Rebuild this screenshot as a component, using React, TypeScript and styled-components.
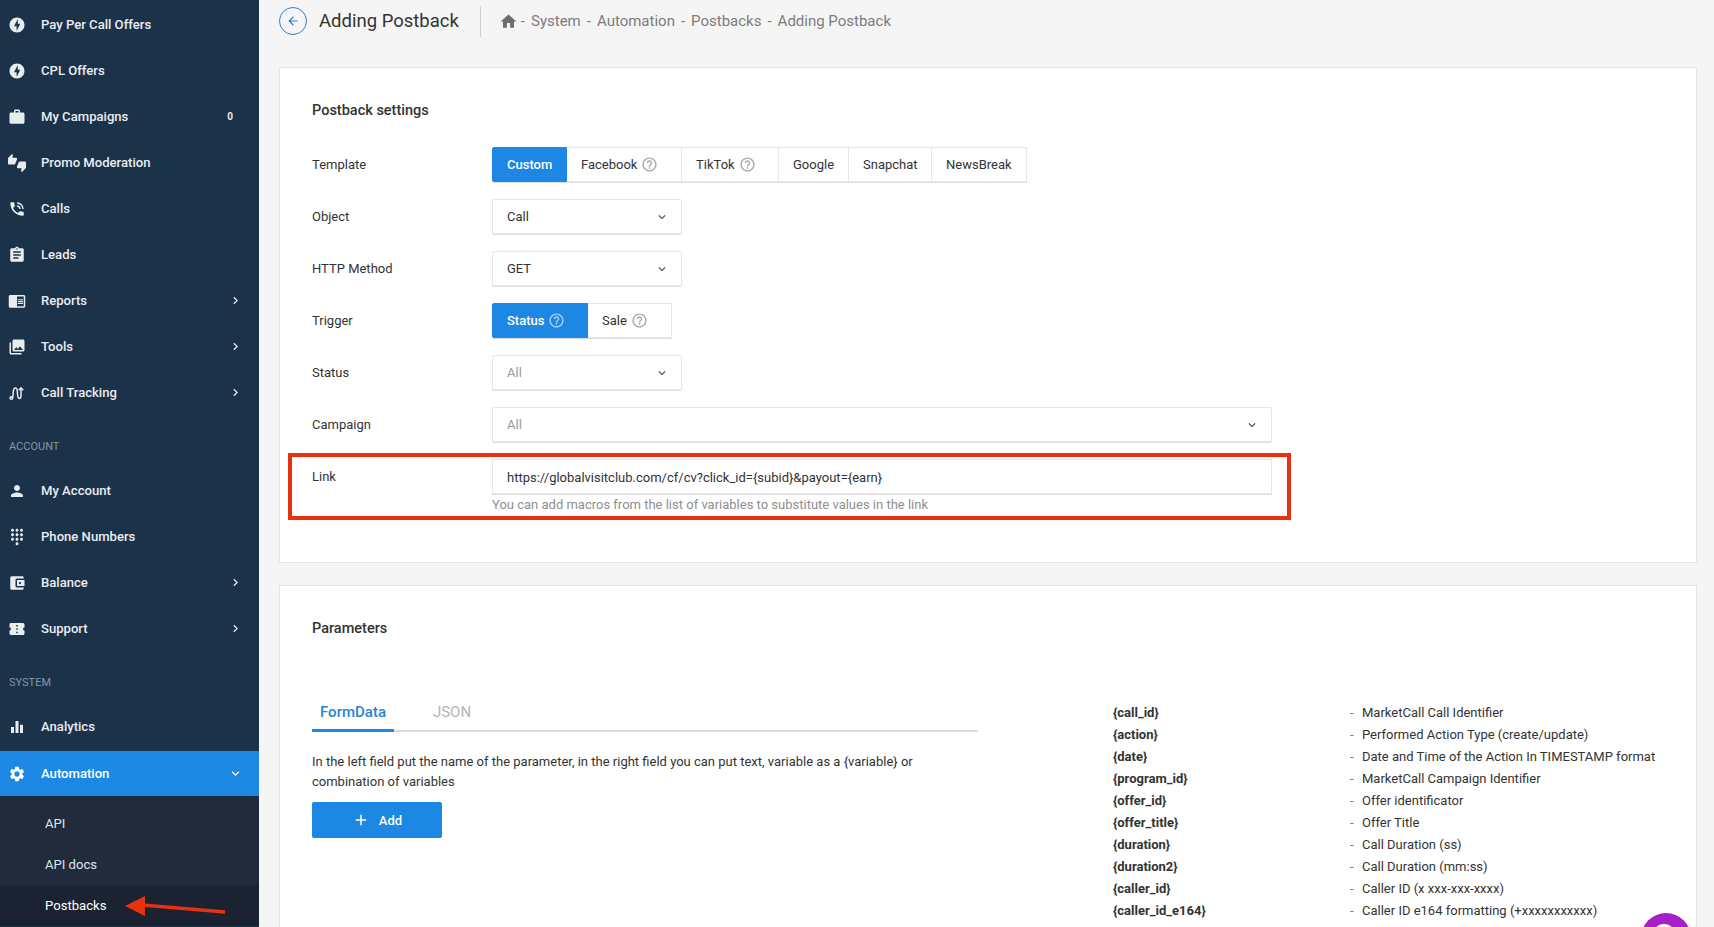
import React from 'react';
import styled, { createGlobalStyle } from 'styled-components';
import {
  MdOfflineBolt,
  MdWork,
  MdThumbsUpDown,
  MdPhoneInTalk,
  MdAssignment,
  MdChromeReaderMode,
  MdPhotoLibrary,
  MdPerson,
  MdDialpad,
  MdAccountBalanceWallet,
  MdConfirmationNumber,
  MdEqualizer,
  MdSettings,
  MdHome,
  MdHelpOutline,
  MdKeyboardArrowRight,
  MdKeyboardArrowDown,
  MdArrowBack,
  MdAdd,
} from 'react-icons/md';

const GlobalStyle = createGlobalStyle`
  html, body {
    margin: 0;
    height: 100%;
    overflow: hidden;
    background: #f5f5f5;
    font-family: Roboto, "Liberation Sans", sans-serif;
  }
  * { box-sizing: border-box; }
`;

const Page = styled.div`
  display: flex;
  width: 1714px;
  height: 927px;
  overflow: hidden;
`;

const Sidebar = styled.nav`
  flex: 0 0 259px;
  height: 927px;
  padding-top: 1px;
  background: #1c3248;
  color: #e8edf2;
  overflow: hidden;
`;

const MenuRow = styled.div<{ $active?: boolean }>`
  display: flex;
  align-items: center;
  height: ${(p) => (p.$active ? '45px' : '46px')};
  margin-top: ${(p) => (p.$active ? '2px' : '0')};
  padding: 0 16px 0 8px;
  background: ${(p) => (p.$active ? '#1d87e4' : 'transparent')};
  color: ${(p) => (p.$active ? '#ffffff' : '#e8edf2')};
  font-size: 13.1px;
  font-weight: 500;
`;

const MenuIcon = styled.span`
  display: flex;
  justify-content: center;
  width: 18px;
  margin-right: 15px;
  padding-top: 1px;
  font-size: 18px;
`;

const MenuLabel = styled.span`
  flex: 1;
`;

const MenuBadge = styled.span`
  margin-right: 10px;
  font-size: 10px;
  font-weight: 700;
`;

const Chevron = styled.span`
  display: flex;
  font-size: 15px;
`;

const SectionLabel = styled.div`
  display: flex;
  align-items: flex-end;
  height: 52px;
  padding: 0 0 14px 9px;
  color: #8595a6;
  font-size: 11px;
`;

const SubMenu = styled.div`
  padding-top: 7px;
  background: #222b3b;
`;

const SubRow = styled.div<{ $active?: boolean }>`
  display: flex;
  align-items: center;
  height: 41px;
  padding-left: 45px;
  background: ${(p) => (p.$active ? '#1b2231' : 'transparent')};
  color: ${(p) => (p.$active ? '#ffffff' : '#dfe4ea')};
  font-size: 13.1px;
`;

const Main = styled.main`
  flex: 1;
  padding: 0 17px 0 20px;
  overflow: hidden;
`;

const TopBar = styled.header`
  display: flex;
  align-items: center;
  height: 42px;
  margin-bottom: 25px;
`;

const BackButton = styled.div`
  display: flex;
  align-items: center;
  justify-content: center;
  width: 28px;
  height: 28px;
  margin-right: 12px;
  border: 1px solid #2f80c8;
  border-radius: 50%;
  color: #2f80c8;
  font-size: 14px;
`;

const PageTitle = styled.h1`
  margin: 0;
  padding-right: 21px;
  color: #333333;
  font-size: 18.5px;
  font-weight: 400;
`;

const Divider = styled.div`
  align-self: center;
  width: 1px;
  height: 31px;
  margin-right: 18px;
  background: #cfcfcf;
`;

const Crumbs = styled.div`
  display: flex;
  align-items: center;
  color: #7c7c7c;
  font-size: 15px;
`;

const CrumbHome = styled.span`
  display: flex;
  margin-right: -3px;
  color: #6e6e6e;
  font-size: 19px;
`;

const CrumbDash = styled.span`
  margin: 0 6px;
`;

const Card = styled.section<{ $height: number }>`
  height: ${(p) => p.$height}px;
  margin-bottom: 22px;
  padding: 33px 32px 0;
  background: #ffffff;
  border: 1px solid #e6e6e6;
`;

const CardTitle = styled.h2`
  margin: 0;
  color: #333333;
  font-size: 14.5px;
  line-height: 20px;
  font-weight: 500;
`;

const Form = styled.div`
  display: flex;
  flex-direction: column;
  gap: 17px;
  width: 960px;
  margin-top: 26px;
`;

const FormRow = styled.div`
  position: relative;
  display: grid;
  grid-template-columns: 180px 1fr;
  align-items: start;
  color: #333333;
  font-size: 13px;
`;

const FormLabel = styled.label`
  display: flex;
  align-items: center;
  height: 35px;
`;

const ButtonGroup = styled.div`
  display: flex;
`;

const GroupButton = styled.div<{ $active?: boolean; $width: number }>`
  display: flex;
  align-items: center;
  justify-content: flex-start;
  gap: 4px;
  width: ${(p) => p.$width}px;
  height: 35px;
  padding-left: 14px;
  background: ${(p) => (p.$active ? '#1d87e4' : '#ffffff')};
  border: 1px solid ${(p) => (p.$active ? '#1d87e4' : '#e6e6e6')};
  border-left-width: 0;
  box-shadow: 0 1px 0 #dddddd;
  color: ${(p) => (p.$active ? '#ffffff' : '#333333')};
  font-weight: ${(p) => (p.$active ? 500 : 400)};

  &:first-child {
    border-left-width: 1px;
    border-radius: 2px 0 0 2px;
  }
`;

const HelpIcon = styled.span<{ $active?: boolean }>`
  display: flex;
  color: ${(p) => (p.$active ? '#a7d2f6' : '#a8a8a8')};
  font-size: 17px;
`;

const Select = styled.div<{ $wide?: boolean; $muted?: boolean }>`
  display: flex;
  align-items: center;
  justify-content: space-between;
  width: ${(p) => (p.$wide ? '100%' : '190px')};
  height: 35px;
  padding: 0 12px 0 14px;
  background: #ffffff;
  border: 1px solid #e6e6e6;
  box-shadow: 0 1px 0 #dddddd;
  color: ${(p) => (p.$muted ? '#9a9a9a' : '#333333')};
  border-radius: 2px;
`;

const SelectArrow = styled.span`
  display: flex;
  color: #444444;
  font-size: 14px;
`;

const Input = styled.div`
  display: flex;
  align-items: center;
  height: 35px;
  padding: 1px 0 0 14px;
  background: #ffffff;
  border: 1px solid #e6e6e6;
  box-shadow: 0 1px 0 #dddddd;
  color: #333333;
`;

const Hint = styled.div`
  margin-top: 3px;
  color: #8f8f8f;
  font-size: 13px;
  line-height: 16px;
`;

const Highlight = styled.div`
  position: absolute;
  left: -24px;
  top: -6px;
  width: 1003px;
  height: 67px;
  border: 4px solid #e6320f;
  pointer-events: none;
`;

const Parameters = styled.div`
  display: grid;
  grid-template-columns: 666px 1fr;
  column-gap: 135px;
  margin-top: 56px;
`;

const Tabs = styled.div`
  display: flex;
  height: 37px;
  border-bottom: 2px solid #dddddd;
`;

const Tab = styled.div<{ $active?: boolean }>`
  display: flex;
  align-items: center;
  justify-content: center;
  width: ${(p) => (p.$active ? '82px' : '116px')};
  height: 37px;
  border-bottom: 3px solid ${(p) => (p.$active ? '#1d87e4' : 'transparent')};
  color: ${(p) => (p.$active ? '#2a84d2' : '#b5b5b5')};
  font-size: 15px;
  font-weight: ${(p) => (p.$active ? 500 : 400)};
`;

const Description = styled.p`
  margin: 20px 0 10px;
  color: #333333;
  font-size: 13px;
  line-height: 20px;
`;

const AddButton = styled.div`
  display: flex;
  align-items: center;
  justify-content: center;
  gap: 9px;
  width: 130px;
  height: 36px;
  background: #1d87e4;
  border-radius: 2px;
  color: #ffffff;
  font-size: 13px;
  font-weight: 500;
`;

const Macros = styled.div`
  padding-top: 6px;
`;

const MacroRow = styled.div`
  display: grid;
  grid-template-columns: 237px 12px 1fr;
  height: 22px;
  align-items: center;
  color: #333333;
  font-size: 13px;
  white-space: nowrap;
`;

const MacroName = styled.span`
  font-weight: 700;
`;

const MacroDash = styled.span`
  color: #777777;
`;

const ChatBubble = styled.div`
  position: absolute;
  left: 1641px;
  top: 913px;
  width: 50px;
  height: 50px;
  border-radius: 50%;
  background: #a61fcb;

  &::before {
    content: '';
    position: absolute;
    left: 12px;
    top: 11px;
    width: 22px;
    height: 22px;
    border-radius: 50%;
    background: #ffffff;
  }
`;

const ArrowMark = styled.svg`
  position: absolute;
  left: 124px;
  top: 893px;
`;

const CallTrackingIcon = () => (
  <svg width="18" height="18" viewBox="0 0 18 18" fill="none" stroke="currentColor" strokeWidth="1.5">
    <circle cx="3.4" cy="14" r="1.3" />
    <path d="M4.6 13.4c.7-1.4.4-3 .6-5.2C5.400 5.800 5.900 4 7.400 4s1.900 1.800 2 4.200c.1 2.400.1 6.300 2 6.300 1.500 0 1.600-1.500 1.600-3V4" />
    <path d="M10.800 6.200 13 3.800l2.200 2.400" />
  </svg>
);

const mainMenu = [
  { label: 'Pay Per Call Offers', icon: <MdOfflineBolt /> },
  { label: 'CPL Offers', icon: <MdOfflineBolt /> },
  { label: 'My Campaigns', icon: <MdWork />, badge: '0' },
  { label: 'Promo Moderation', icon: <MdThumbsUpDown /> },
  { label: 'Calls', icon: <MdPhoneInTalk /> },
  { label: 'Leads', icon: <MdAssignment /> },
  { label: 'Reports', icon: <MdChromeReaderMode />, arrow: true },
  { label: 'Tools', icon: <MdPhotoLibrary />, arrow: true },
  { label: 'Call Tracking', icon: <CallTrackingIcon />, arrow: true },
];

const accountMenu = [
  { label: 'My Account', icon: <MdPerson /> },
  { label: 'Phone Numbers', icon: <MdDialpad /> },
  { label: 'Balance', icon: <MdAccountBalanceWallet />, arrow: true },
  { label: 'Support', icon: <MdConfirmationNumber />, arrow: true },
];

const macros = [
  ['{call_id}', 'MarketCall Call Identifier'],
  ['{action}', 'Performed Action Type (create/update)'],
  ['{date}', 'Date and Time of the Action In TIMESTAMP format'],
  ['{program_id}', 'MarketCall Campaign Identifier'],
  ['{offer_id}', 'Offer identificator'],
  ['{offer_title}', 'Offer Title'],
  ['{duration}', 'Call Duration (ss)'],
  ['{duration2}', 'Call Duration (mm:ss)'],
  ['{caller_id}', 'Caller ID (x xxx-xxx-xxxx)'],
  ['{caller_id_e164}', 'Caller ID e164 formatting (+xxxxxxxxxxx)'],
];

const templates = [
  { label: 'Custom', width: 75, active: true },
  { label: 'Facebook', width: 115, help: true },
  { label: 'TikTok', width: 97, help: true },
  { label: 'Google', width: 70 },
  { label: 'Snapchat', width: 83 },
  { label: 'NewsBreak', width: 95 },
];

type Item = { label: string; icon: React.ReactNode; badge?: string; arrow?: boolean };

const MenuItem = ({ item }: { item: Item }) => (
  <MenuRow>
    <MenuIcon>{item.icon}</MenuIcon>
    <MenuLabel>{item.label}</MenuLabel>
    {item.badge && <MenuBadge>{item.badge}</MenuBadge>}
    {item.arrow && (
      <Chevron>
        <MdKeyboardArrowRight />
      </Chevron>
    )}
  </MenuRow>
);

const SelectBox = ({ value, wide, muted }: { value: string; wide?: boolean; muted?: boolean }) => (
  <Select $wide={wide} $muted={muted}>
    {value}
    <SelectArrow>
      <MdKeyboardArrowDown />
    </SelectArrow>
  </Select>
);

const App = () => {
  const crumbs = ['System', 'Automation', 'Postbacks', 'Adding Postback'];

  return (
    <Page>
      <GlobalStyle />
      <Sidebar>
        {mainMenu.map((item) => (
          <MenuItem key={item.label} item={item} />
        ))}
        <SectionLabel>ACCOUNT</SectionLabel>
        {accountMenu.map((item) => (
          <MenuItem key={item.label} item={item} />
        ))}
        <SectionLabel>SYSTEM</SectionLabel>
        <MenuItem item={{ label: 'Analytics', icon: <MdEqualizer /> }} />
        <MenuRow $active>
          <MenuIcon>
            <MdSettings />
          </MenuIcon>
          <MenuLabel>Automation</MenuLabel>
          <Chevron>
            <MdKeyboardArrowDown />
          </Chevron>
        </MenuRow>
        <SubMenu>
          <SubRow>API</SubRow>
          <SubRow>API docs</SubRow>
          <SubRow $active>Postbacks</SubRow>
        </SubMenu>
      </Sidebar>
      <ArrowMark width="102" height="26" viewBox="0 0 102 26">
        <path d="M18 12 L101 19" stroke="#e6320f" strokeWidth="3.5" fill="none" />
        <path d="M1 13 L21 3 L21 23 Z" fill="#e6320f" />
      </ArrowMark>

      <Main>
        <TopBar>
          <BackButton>
            <MdArrowBack />
          </BackButton>
          <PageTitle>Adding Postback</PageTitle>
          <Divider />
          <Crumbs>
            <CrumbHome>
              <MdHome />
            </CrumbHome>
            {crumbs.map((crumb) => (
              <React.Fragment key={crumb}>
                <CrumbDash>-</CrumbDash>
                {crumb}
              </React.Fragment>
            ))}
          </Crumbs>
        </TopBar>

        <Card $height={496}>
          <CardTitle>Postback settings</CardTitle>
          <Form>
            <FormRow>
              <FormLabel>Template</FormLabel>
              <ButtonGroup>
                {templates.map((t) => (
                  <GroupButton key={t.label} $active={t.active} $width={t.width}>
                    {t.label}
                    {t.help && (
                      <HelpIcon>
                        <MdHelpOutline />
                      </HelpIcon>
                    )}
                  </GroupButton>
                ))}
              </ButtonGroup>
            </FormRow>
            <FormRow>
              <FormLabel>Object</FormLabel>
              <SelectBox value="Call" />
            </FormRow>
            <FormRow>
              <FormLabel>HTTP Method</FormLabel>
              <SelectBox value="GET" />
            </FormRow>
            <FormRow>
              <FormLabel>Trigger</FormLabel>
              <ButtonGroup>
                <GroupButton $active $width={96}>
                  Status
                  <HelpIcon $active>
                    <MdHelpOutline />
                  </HelpIcon>
                </GroupButton>
                <GroupButton $width={84}>
                  Sale
                  <HelpIcon>
                    <MdHelpOutline />
                  </HelpIcon>
                </GroupButton>
              </ButtonGroup>
            </FormRow>
            <FormRow>
              <FormLabel>Status</FormLabel>
              <SelectBox value="All" muted />
            </FormRow>
            <FormRow>
              <FormLabel>Campaign</FormLabel>
              <SelectBox value="All" wide muted />
            </FormRow>
            <FormRow>
              <FormLabel>Link</FormLabel>
              <div>
                <Input>{'https://globalvisitclub.com/cf/cv?click_id={subid}&payout={earn}'}</Input>
                <Hint>You can add macros from the list of variables to substitute values in the link</Hint>
              </div>
              <Highlight />
            </FormRow>
          </Form>
        </Card>

        <Card $height={420}>
          <CardTitle>Parameters</CardTitle>
          <Parameters>
            <div>
              <Tabs>
                <Tab $active>FormData</Tab>
                <Tab>JSON</Tab>
              </Tabs>
              <Description>
                {'In the left field put the name of the parameter, in the right field you can put text, variable as a {variable} or combination of variables'}
              </Description>
              <AddButton>
                <MdAdd size={18} />
                Add
              </AddButton>
            </div>
            <Macros>
              {macros.map(([name, text]) => (
                <MacroRow key={name}>
                  <MacroName>{name}</MacroName>
                  <MacroDash>-</MacroDash>
                  <span>{text}</span>
                </MacroRow>
              ))}
            </Macros>
          </Parameters>
        </Card>
      </Main>
      <ChatBubble />
    </Page>
  );
};

export default App;
